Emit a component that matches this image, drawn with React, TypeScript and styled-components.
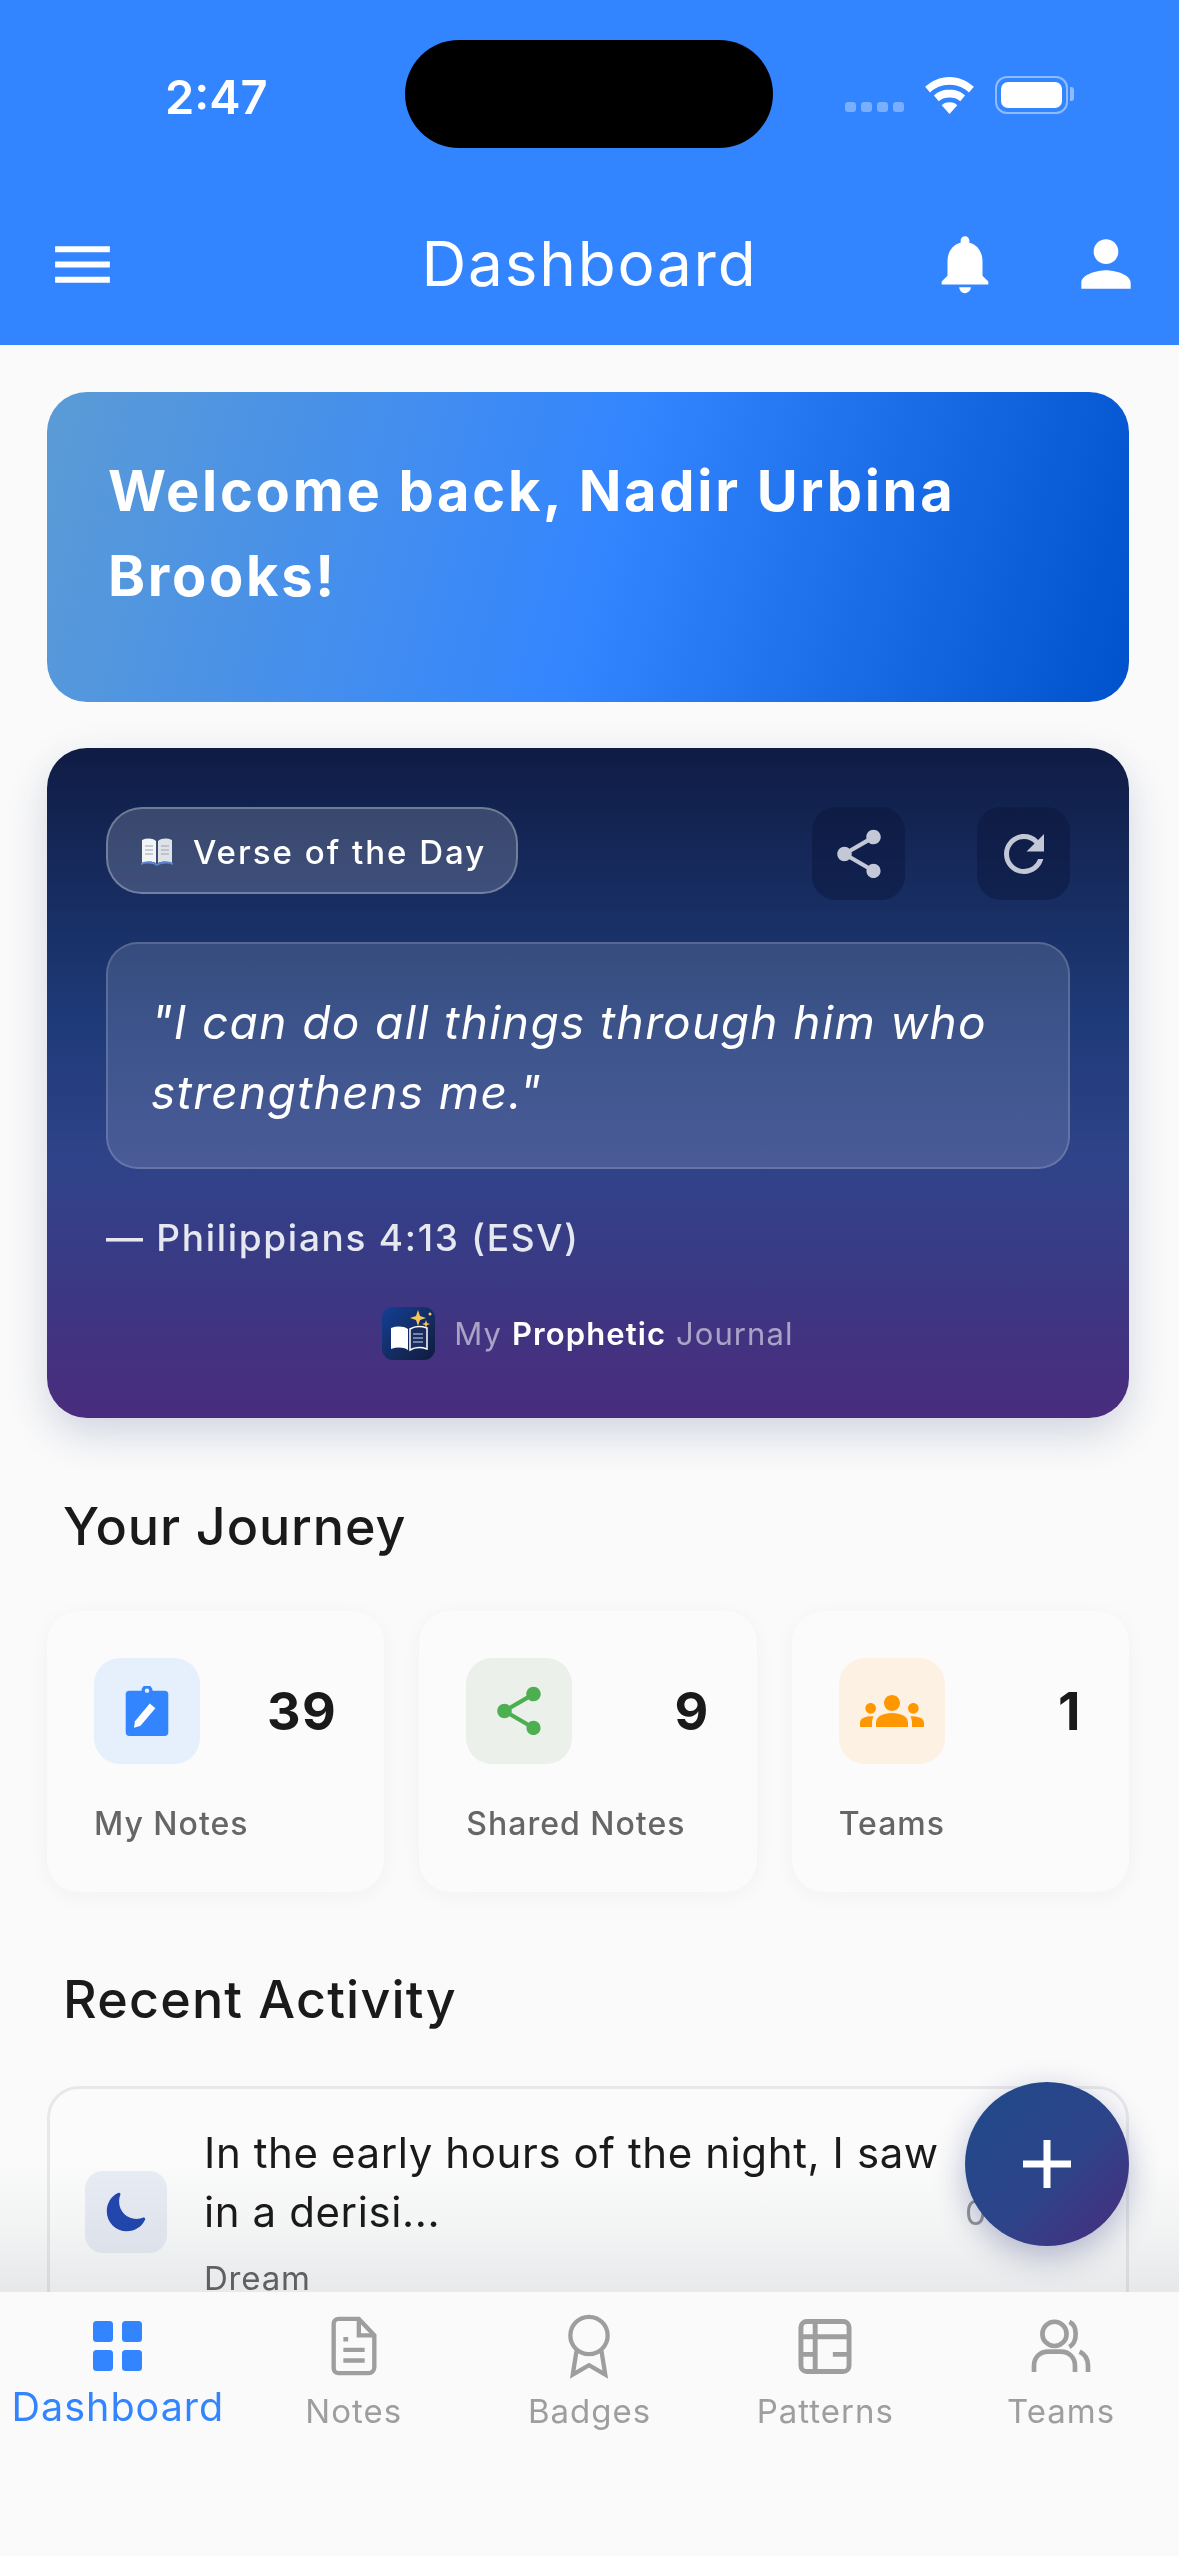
import React from "react";
import styled, { createGlobalStyle } from "styled-components";
import { MdMenu, MdNotifications, MdPerson, MdRefresh, MdShare, MdGroups } from "react-icons/md";
import { IoMoon } from "react-icons/io5";

const GlobalStyle = createGlobalStyle`
  html, body {
    margin: 0;
    padding: 0;
    background: #fafafa;
  }
  * {
    box-sizing: border-box;
  }
`;

const stats = [
  { id: "notes", label: "My Notes", value: "39", tint: "#e6f0fc", color: "#3385ff" },
  { id: "shared", label: "Shared Notes", value: "9", tint: "#ebf0eb", color: "#4caf50" },
  { id: "teams", label: "Teams", value: "1", tint: "#fdf1e4", color: "#ff9800" },
];

const ClipboardIcon = () => (
  <svg width="44" height="50" viewBox="0 0 46 54">
    <path
      fill="currentColor"
      d="M4 5h13a6 6 0 0 1 12 0h13a4 4 0 0 1 4 4v41a4 4 0 0 1-4 4H4a4 4 0 0 1-4-4V9a4 4 0 0 1 4-4z"
    />
    <circle cx="23" cy="5" r="2.4" fill="#e6f0fc" />
    <path fill="#fff" d="M10 38l16-19 6 5-16 19-7 2z" />
  </svg>
);

const GridIcon = () => (
  <svg width="50" height="50" viewBox="0 0 50 50" fill="currentColor">
    <rect x="0" y="0" width="20" height="21" rx="3.5" />
    <rect x="29" y="0" width="20" height="21" rx="3.5" />
    <rect x="0" y="29" width="20" height="21" rx="3.5" />
    <rect x="29" y="29" width="20" height="21" rx="3.5" />
  </svg>
);

const NoteIcon = () => (
  <svg width="48" height="60" viewBox="0 0 48 62" fill="none" stroke="currentColor" strokeWidth="4.5">
    <path d="M8 3h21l16 17v33a6 6 0 0 1-6 6H8a5 5 0 0 1-5-5V8a5 5 0 0 1 5-5z" />
    <path d="M29 3v17h16" />
    <path d="M13 24h5M13 35h22M13 46h22" />
  </svg>
);

const BadgeIcon = () => (
  <svg width="44" height="66" viewBox="0 0 46 66" fill="none" stroke="currentColor" strokeWidth="4.5">
    <circle cx="23" cy="22" r="19.5" />
    <path d="M10 38L6 63l17-10 17 10-4-25" />
  </svg>
);

const PatternIcon = () => (
  <svg width="54" height="55" viewBox="0 0 54 56" fill="none" stroke="currentColor" strokeWidth="5">
    <rect x="2.5" y="2.5" width="49" height="51" rx="6" />
    <path d="M2.5 18h49M2.5 36h14M17 3v50M35 36h16" />
  </svg>
);

const PeopleIcon = () => (
  <svg width="64" height="54" viewBox="0 0 64 58" fill="none" stroke="currentColor" strokeWidth="5" strokeLinecap="butt">
    <circle cx="25" cy="16" r="13" />
    <path d="M41 3c9 4 9 22 0 27" />
    <path d="M3 57V50c0-9 7-15 15-15h14c8 0 15 6 15 15v7" />
    <path d="M52 35c6 3 9 8 9 15v7" />
  </svg>
);

const OpenBookEmoji = () => (
  <svg width="32" height="28" viewBox="0 0 32 28">
    <path fill="#f3f4f6" d="M1 2c5-2 10-2 14 1v22c-4-2-9-2-14 0z" />
    <path fill="#dfe3e8" d="M31 2c-5-2-10-2-14 1v22c4-2 9-2 14 0z" />
    <path stroke="#9aa3b2" strokeWidth="1" d="M4 8h8M4 12h8M4 16h8M20 8h8M20 12h8M20 16h8" />
    <path fill="#5a86d0" d="M0 25c5-2 11-2 16 1 5-3 11-3 16-1v2c-5-2-11-2-16 1-5-3-11-3-16-1z" />
  </svg>
);

const AppLogo = () => (
  <svg width="53" height="53" viewBox="0 0 53 53">
    <defs>
      <linearGradient id="logoBg" x1="0" y1="0" x2="1" y2="1">
        <stop offset="0" stopColor="#123f96" />
        <stop offset="0.6" stopColor="#142a5c" />
        <stop offset="1" stopColor="#0e1b40" />
      </linearGradient>
    </defs>
    <rect width="53" height="53" rx="11" fill="url(#logoBg)" />
    <path fill="#fff" d="M9 21c6-2 12-2 17 1v21c-5-3-11-3-17-1z" />
    <path fill="#1a2c5c" stroke="#fff" strokeWidth="1.5" d="M45 21c-6-2-12-2-17 1v21c5-3 11-3 17-1z" />
    <path stroke="#8ea0c4" strokeWidth="1.4" d="M31 27h10M31 31h10M31 35h10" />
    <path fill="#f7c65a" d="M36 3l2 6 6 2-6 2-2 6-2-6-6-2 6-2z" />
    <path fill="#f7c65a" d="M44 13l1 3 3 1-3 1-1 3-1-3-3-1 3-1z" />
    <circle cx="48" cy="7" r="1.5" fill="#f7c65a" />
  </svg>
);

const tabs = [
  { id: "dashboard", label: "Dashboard", icon: <GridIcon />, active: true },
  { id: "notes", label: "Notes", icon: <NoteIcon />, active: false },
  { id: "badges", label: "Badges", icon: <BadgeIcon />, active: false },
  { id: "patterns", label: "Patterns", icon: <PatternIcon />, active: false },
  { id: "teams", label: "Teams", icon: <PeopleIcon />, active: false },
];

const App = () => {
  return (
    <Screen>
      <GlobalStyle />
      <Header>
        <StatusBar>
          <Time>2:47</Time>
          <Island />
          <StatusIcons>
            <SignalDots>
              <i />
              <i />
              <i />
              <i />
            </SignalDots>
            <svg width="49" height="37" viewBox="0 0 50 38" fill="#fff">
              <path d="M25 0C15 0 7 4 0 10l5 6c5-5 12-8 20-8s15 3 20 8l5-6C43 4 35 0 25 0z" />
              <path d="M25 13c-7 0-12 2-16 6l5 6c3-3 7-4 11-4s8 1 11 4l5-6c-4-4-9-6-16-6z" />
              <path d="M25 26c-4 0-6 1-8 3l8 9 8-9c-2-2-4-3-8-3z" />
            </svg>
            <Battery>
              <BatteryFill />
            </Battery>
          </StatusIcons>
        </StatusBar>
        <NavBar>
          <MenuButton>
            <MdMenu size={73} />
          </MenuButton>
          <NavTitle>Dashboard</NavTitle>
          <NavActions>
            <MdNotifications size={70} />
            <MdPerson size={74} />
          </NavActions>
        </NavBar>
      </Header>

      <Content>
        <WelcomeCard>
          <WelcomeText>Welcome back, Nadir Urbina Brooks!</WelcomeText>
        </WelcomeCard>

        <VerseCard>
          <VerseTop>
            <VerseChip>
              <OpenBookEmoji />
              <span>Verse of the Day</span>
            </VerseChip>
            <VerseActions>
              <VerseButton>
                <MdShare size={58} />
              </VerseButton>
              <VerseButton>
                <MdRefresh size={60} />
              </VerseButton>
            </VerseActions>
          </VerseTop>
          <QuoteBox>"I can do all things through him who strengthens me."</QuoteBox>
          <VerseRef>— Philippians 4:13 (ESV)</VerseRef>
          <Brand>
            <AppLogo />
            <BrandText>
              My <strong>Prophetic</strong> Journal
            </BrandText>
          </Brand>
        </VerseCard>

        <SectionTitle>Your Journey</SectionTitle>
        <StatsRow>
          {stats.map(stat => (
            <StatCard key={stat.id}>
              <StatTop>
                <StatIcon $tint={stat.tint} $color={stat.color}>
                  {stat.id === "notes" && <ClipboardIcon />}
                  {stat.id === "shared" && <MdShare size={58} />}
                  {stat.id === "teams" && <MdGroups size={64} />}
                </StatIcon>
                <StatValue>{stat.value}</StatValue>
              </StatTop>
              <StatLabel>{stat.label}</StatLabel>
            </StatCard>
          ))}
        </StatsRow>

        <ActivityTitle>Recent Activity</ActivityTitle>
        <ActivityCard>
          <ActivityIcon>
            <IoMoon size={44} />
          </ActivityIcon>
          <ActivityBody>
            <ActivityText>In the early hours of the night, I saw in a derisi...</ActivityText>
            <ActivityType>Dream</ActivityType>
          </ActivityBody>
          <ActivityDate>0</ActivityDate>
        </ActivityCard>
        <BottomFade />
      </Content>

      <Fab>
        <svg width="48" height="48" viewBox="0 0 48 48" stroke="#fff" strokeWidth="7">
          <path d="M24 0v48M0 24h48" />
        </svg>
      </Fab>

      <TabBar>
        {tabs.map(tab => (
          <TabItem key={tab.id} $active={tab.active}>
            <TabIcon>{tab.icon}</TabIcon>
            <TabLabel $active={tab.active}>{tab.label}</TabLabel>
          </TabItem>
        ))}
      </TabBar>
    </Screen>
  );
};

const Screen = styled.div`
  position: relative;
  display: flex;
  flex-direction: column;
  width: 1179px;
  height: 2556px;
  overflow: hidden;
  background: #fafafa;
  font-family: Inter, "Noto Sans", sans-serif;
  color: #1a1a1a;
`;

const Header = styled.header`
  flex: none;
  height: 345px;
  background: #3385ff;
  color: #fff;
`;

const StatusBar = styled.div`
  display: flex;
  align-items: flex-start;
  height: 188px;
  padding-top: 40px;
`;

const Time = styled.div`
  width: 405px;
  padding: 29px 0 0 165px;
  font-size: 47px;
  line-height: 56px;
  font-weight: 600;
`;

const Island = styled.div`
  flex: none;
  width: 368px;
  height: 108px;
  border-radius: 54px;
  background: #000;
`;

const StatusIcons = styled.div`
  display: flex;
  align-items: flex-end;
  height: 74px;
  padding-left: 72px;
  gap: 21px;
`;

const SignalDots = styled.div`
  display: flex;
  gap: 5px;
  padding-bottom: 2px;

  i {
    display: block;
    width: 11px;
    height: 10px;
    border-radius: 3px;
    background: rgba(255, 255, 255, 0.35);
  }
`;

const Battery = styled.div`
  position: relative;
  width: 73px;
  height: 38px;
  padding: 4px;
  border: 2.5px solid rgba(255, 255, 255, 0.45);
  border-radius: 12px;

  &::after {
    content: "";
    position: absolute;
    top: 9px;
    right: -8px;
    width: 4px;
    height: 14px;
    border-radius: 0 3px 3px 0;
    background: rgba(255, 255, 255, 0.45);
  }
`;

const BatteryFill = styled.div`
  height: 100%;
  border-radius: 7px;
  background: #fff;
`;

const NavBar = styled.div`
  display: grid;
  grid-template-columns: 1fr auto 1fr;
  align-items: center;
  height: 152px;
`;

const MenuButton = styled.div`
  display: flex;
  padding-left: 46px;
`;

const NavTitle = styled.h1`
  margin: 0;
  font-size: 62px;
  line-height: 76px;
  font-weight: 400;
  letter-spacing: 1.8px;
`;

const NavActions = styled.div`
  display: flex;
  justify-content: flex-end;
  align-items: center;
  gap: 69px;
  padding-right: 36px;
`;

const Content = styled.main`
  position: relative;
  flex: 1;
  min-height: 0;
  overflow: hidden;
  padding: 47px 50px 0 47px;
`;

const WelcomeCard = styled.section`
  height: 310px;
  padding: 57px 60px 0 61px;
  border-radius: 40px;
  background: linear-gradient(105deg, #5b9bd5 0%, #3385ff 52%, #0052cc 100%);
`;

const WelcomeText = styled.h2`
  margin: 0;
  font-size: 56px;
  line-height: 85px;
  font-weight: 700;
  letter-spacing: 2.7px;
  color: #fff;
`;

const VerseCard = styled.section`
  display: flex;
  flex-direction: column;
  height: 670px;
  margin-top: 46px;
  padding: 59px 59px 0;
  border-radius: 40px;
  color: #fff;
  background: linear-gradient(180deg, #0f1c44 0%, #1e3a78 40%, #2f4389 62%, #4a2c7d 100%);
  box-shadow: 0 16px 40px rgba(30, 50, 110, 0.18);
`;

const VerseTop = styled.div`
  display: flex;
  justify-content: space-between;
  align-items: flex-start;
`;

const VerseChip = styled.div`
  display: flex;
  align-items: center;
  gap: 20px;
  width: 412px;
  height: 87px;
  padding: 3px 0 0 33px;
  border: 2.5px solid rgba(255, 255, 255, 0.28);
  border-radius: 36px;
  background: rgba(255, 255, 255, 0.17);
  font-size: 33px;
  font-weight: 500;
  letter-spacing: 2px;
`;

const VerseActions = styled.div`
  display: flex;
  gap: 72px;
`;

const VerseButton = styled.div`
  display: flex;
  align-items: center;
  justify-content: center;
  width: 93px;
  height: 93px;
  border-radius: 24px;
  background: rgba(10, 20, 55, 0.42);
  color: #c2c8d6;
`;

const QuoteBox = styled.blockquote`
  height: 227px;
  margin: 42px 0 0;
  padding: 43px 40px 0 43px;
  border: 2.5px solid rgba(255, 255, 255, 0.16);
  border-radius: 32px;
  background: rgba(255, 255, 255, 0.13);
  font-size: 46px;
  line-height: 70px;
  font-style: italic;
  letter-spacing: 1.4px;
`;

const VerseRef = styled.div`
  margin-top: 46px;
  font-size: 37px;
  line-height: 46px;
  font-weight: 500;
  letter-spacing: 1.7px;
  color: #e6e8f0;
`;

const Brand = styled.div`
  display: flex;
  align-items: center;
  justify-content: center;
  gap: 19px;
  margin-top: 46px;
`;

const BrandText = styled.div`
  font-size: 31px;
  font-weight: 400;
  letter-spacing: 1.1px;
  color: rgba(255, 255, 255, 0.55);

  strong {
    font-weight: 600;
    color: #fff;
  }
`;

const SectionTitle = styled.h3`
  margin: 77px 0 0 16px;
  font-size: 52px;
  line-height: 64px;
  font-weight: 500;
  letter-spacing: 0.9px;
`;

const StatsRow = styled.div`
  display: grid;
  grid-template-columns: repeat(3, 1fr);
  gap: 35px;
  margin-top: 52px;
`;

const StatCard = styled.div`
  height: 281px;
  padding: 47px 47px 0;
  border-radius: 32px;
  background: #fbfbfb;
  box-shadow: 0 4px 20px rgba(30, 50, 60, 0.04);
`;

const StatTop = styled.div`
  display: flex;
  align-items: center;
  justify-content: space-between;
`;

const StatIcon = styled.div<{ $tint: string; $color: string }>`
  display: flex;
  align-items: center;
  justify-content: center;
  width: 106px;
  height: 106px;
  border-radius: 26px;
  background: ${({ $tint }) => $tint};
  color: ${({ $color }) => $color};
`;

const StatValue = styled.div`
  font-size: 52px;
  font-weight: 700;
  letter-spacing: 1.5px;
`;

const StatLabel = styled.div`
  margin-top: 40px;
  font-size: 32px;
  line-height: 40px;
  font-weight: 500;
  letter-spacing: 1px;
  color: #666;
`;

const ActivityTitle = styled(SectionTitle)`
  margin-top: 76px;
  letter-spacing: 1.2px;
`;

const ActivityCard = styled.div`
  display: flex;
  align-items: flex-start;
  height: 300px;
  margin-top: 54px;
  padding: 34px 36px 0 35px;
  border: 3px solid #e8e8ea;
  border-radius: 32px;
  background: #fbfbfb;
`;

const ActivityIcon = styled.div`
  flex: none;
  display: flex;
  align-items: center;
  justify-content: center;
  width: 82px;
  height: 82px;
  margin-top: 48px;
  border-radius: 18px;
  background: #e8ecf4;
  color: #2347b0;
`;

const ActivityBody = styled.div`
  flex: none;
  width: 745px;
  margin-left: 37px;
`;

const ActivityText = styled.div`
  font-size: 42px;
  line-height: 59px;
  letter-spacing: 0.6px;
`;

const ActivityType = styled.div`
  margin-top: 16px;
  font-size: 33px;
  line-height: 42px;
  letter-spacing: 0.8px;
  color: #666;
`;

const ActivityDate = styled.div`
  margin: 70px 0 0 16px;
  font-size: 34px;
  line-height: 40px;
  color: #999;
`;

const BottomFade = styled.div`
  position: absolute;
  left: 0;
  right: 0;
  bottom: 0;
  height: 130px;
  background: linear-gradient(180deg, #fff 0%, #f7f8f8 50%, #ecedef 100%);
  mix-blend-mode: multiply;
`;

const Fab = styled.div`
  position: absolute;
  left: 965px;
  top: 2082px;
  display: flex;
  align-items: center;
  justify-content: center;
  width: 164px;
  height: 164px;
  border-radius: 50%;
  background: linear-gradient(135deg, #1f4a8a 0%, #2d4489 55%, #4a2c7d 100%);
  box-shadow: 0 10px 32px rgba(40, 50, 120, 0.32);
`;

const TabBar = styled.nav`
  position: relative;
  flex: none;
  display: grid;
  grid-template-columns: repeat(5, 1fr);
  height: 264px;
  background: #fafafa;
`;

const TabItem = styled.div<{ $active: boolean }>`
  display: flex;
  flex-direction: column;
  align-items: center;
  padding-top: 18px;
  color: ${({ $active }) => ($active ? "#3385ff" : "#9e9e9e")};
`;

const TabIcon = styled.div`
  display: flex;
  align-items: center;
  justify-content: center;
  height: 72px;
`;

const TabLabel = styled.div<{ $active: boolean }>`
  margin-top: ${({ $active }) => ($active ? "2px" : "6px")};
  font-size: ${({ $active }) => ($active ? "39.5px" : "33px")};
  line-height: 46px;
  letter-spacing: 1px;
  white-space: nowrap;
`;

export default App;
